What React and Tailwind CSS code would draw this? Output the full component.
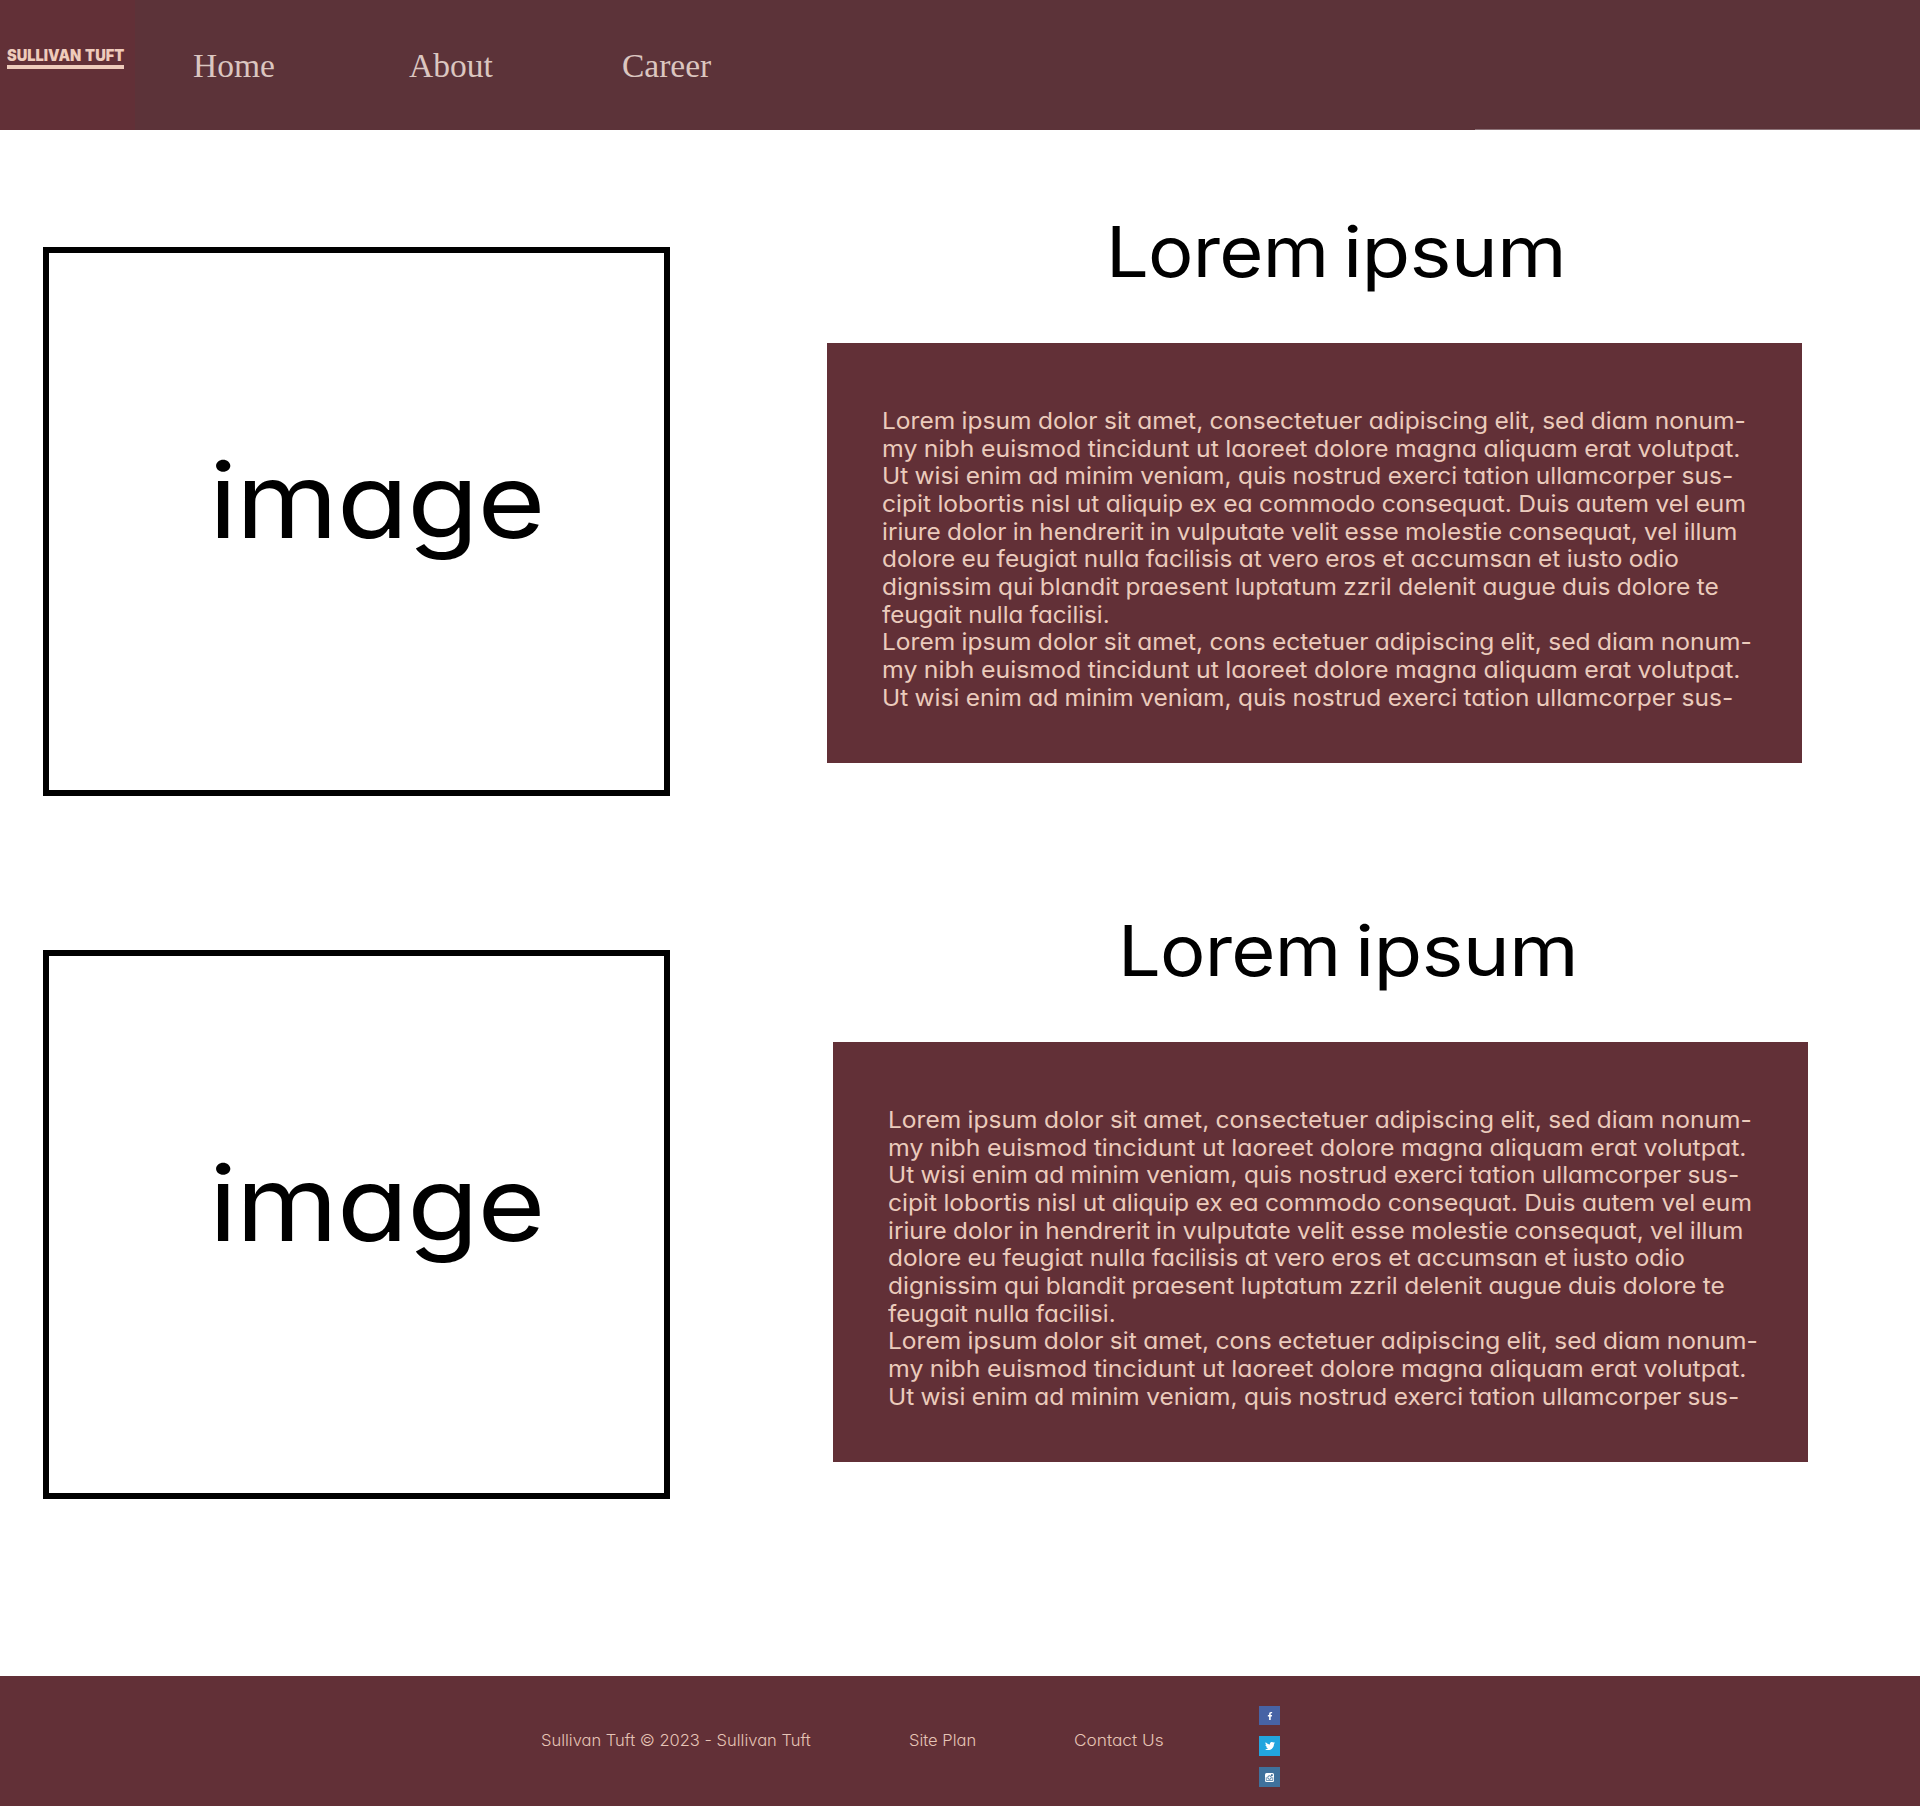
import { useLayoutEffect, useRef } from "react";
import { FaFacebookF, FaTwitter } from "react-icons/fa";

// One line of text stretched horizontally so that it spans `width` pixels.
function FitText({ width, className = "", children }) {
  const ref = useRef(null);
  useLayoutEffect(() => {
    const el = ref.current;
    el.style.transform = `scaleX(${width / el.offsetWidth})`;
  }, [width, children]);
  return (
    <span ref={ref} className={`inline-block w-max origin-left whitespace-pre ${className}`}>
      {children}
    </span>
  );
}

const LINES = [
  ["Lorem ipsum dolor sit amet, consectetuer adipiscing elit, sed diam nonum-", 864],
  ["my nibh euismod tincidunt ut laoreet dolore magna aliquam erat volutpat.", 858],
  ["Ut wisi enim ad minim veniam, quis nostrud exerci tation ullamcorper sus-", 851],
  ["cipit lobortis nisl ut aliquip ex ea commodo consequat. Duis autem vel eum", 864],
  ["iriure dolor in hendrerit in vulputate velit esse molestie consequat, vel illum", 855],
  ["dolore eu feugiat nulla facilisis at vero eros et accumsan et iusto odio", 797],
  ["dignissim qui blandit praesent luptatum zzril delenit augue duis dolore te", 837],
  ["feugait nulla facilisi.", 228],
  ["Lorem ipsum dolor sit amet, cons ectetuer adipiscing elit, sed diam nonum-", 870],
  ["my nibh euismod tincidunt ut laoreet dolore magna aliquam erat volutpat.", 858],
  ["Ut wisi enim ad minim veniam, quis nostrud exerci tation ullamcorper sus-", 851],
];

function ImageFrame() {
  return (
    <div className="h-[549px] w-[627px] shrink-0 border-6 border-black pt-[172px] pl-[160px] text-[104px] leading-[150px]">
      <FitText width={335} className="[font-variation-settings:'opsz'_14] tracking-[-0.01em]">
        image
      </FitText>
    </div>
  );
}

function Article({ className, titleClass }) {
  return (
    <article className={className}>
      <h2
        className={`flex h-[146px] text-[70px] leading-[110px] tracking-[-0.01em] [font-variation-settings:'opsz'_14] ${titleClass}`}
      >
        <span className="w-[237px]">
          <FitText width={222}>Lorem</FitText>
        </span>
        <FitText width={223}>ipsum</FitText>
      </h2>
      <div className="flex h-[420px] w-[975px] flex-col bg-[#623037] pt-[65px] pl-[55px] text-[23px] leading-[27.65px] font-[370] text-[#ebcbbc] [word-spacing:-0.02em]">
        {LINES.map(([text, width], i) => (
          <FitText key={i} width={width}>
            {text}
          </FitText>
        ))}
      </div>
    </article>
  );
}

export default function App() {
  return (
    <div className="flex h-[1806px] w-[1920px] flex-col overflow-hidden bg-white font-['Inter',sans-serif] text-black [font-feature-settings:'cv11']">
      <header className="relative flex h-[130px] shrink-0 bg-[#5c3339]">
        <div className="h-full w-[135px] bg-[#623037] pt-[46px] pl-[7px] text-[#eecbbb]">
          <div className="h-[19px] text-[15.5px] leading-[20px] font-black">
            <FitText width={117} className="[word-spacing:0.06em]">
              SULLIVAN TUFT
            </FitText>
          </div>
          <div className="h-[4px] w-[117px] bg-[#eecbbb]" />
        </div>
        <nav className="flex pt-[47px] pl-[58px] font-['Liberation_Serif',serif] text-[33.5px] leading-[38px] text-[#dbc6c0]">
          <a className="w-[216px]">Home</a>
          <a className="w-[213px]">About</a>
          <a>Career</a>
        </nav>
        <div className="absolute right-0 bottom-0 h-px w-[445px] bg-[#8d7378]" />
      </header>

      <main className="h-[1546px] shrink-0">
        <section className="flex h-[699px] items-start pl-[43px]">
          <div className="pt-[117px]">
            <ImageFrame />
          </div>
          <Article className="ml-[157px] pt-[67px]" titleClass="pl-[279px]" />
        </section>
        <section className="flex items-start pl-[43px]">
          <div className="pt-[121px]">
            <ImageFrame />
          </div>
          <Article className="ml-[163px] pt-[67px]" titleClass="pl-[285px]" />
        </section>
      </main>

      <footer className="flex h-[130px] shrink-0 bg-[#623037] pl-[541px] text-[16.5px] leading-[24px] font-light text-[#e6c4b6]">
        <p className="w-[368px] pt-[52px]">
          <FitText width={270}>Sullivan Tuft © 2023 - Sullivan Tuft</FitText>
        </p>
        <a className="w-[165px] pt-[52px]">
          <FitText width={67}>Site Plan</FitText>
        </a>
        <a className="w-[185px] pt-[52px]">
          <FitText width={90}>Contact Us</FitText>
        </a>
        <div className="flex flex-col gap-[11px] pt-[30px] text-white">
          <span className="flex h-[19px] w-[21px] items-center justify-center bg-[#4763a5]">
            <FaFacebookF size={8} />
          </span>
          <span className="flex h-[20px] w-[21px] items-center justify-center bg-[#23a5de]">
            <FaTwitter size={10} />
          </span>
          <span className="flex h-[20px] w-[21px] items-center justify-center bg-[#3f719c]">
            <svg width="9" height="9" viewBox="0 0 18 18">
              <rect width="18" height="18" rx="3" fill="#fff" />
              <rect x="12" y="2.5" width="3.5" height="3.5" fill="#3f719c" />
              <path d="M2.5 8.5V15h13V8.5" fill="none" stroke="#3f719c" strokeWidth="1.5" />
              <circle cx="9" cy="9" r="3.5" fill="#fff" stroke="#3f719c" strokeWidth="2" />
            </svg>
          </span>
        </div>
      </footer>
    </div>
  );
}
